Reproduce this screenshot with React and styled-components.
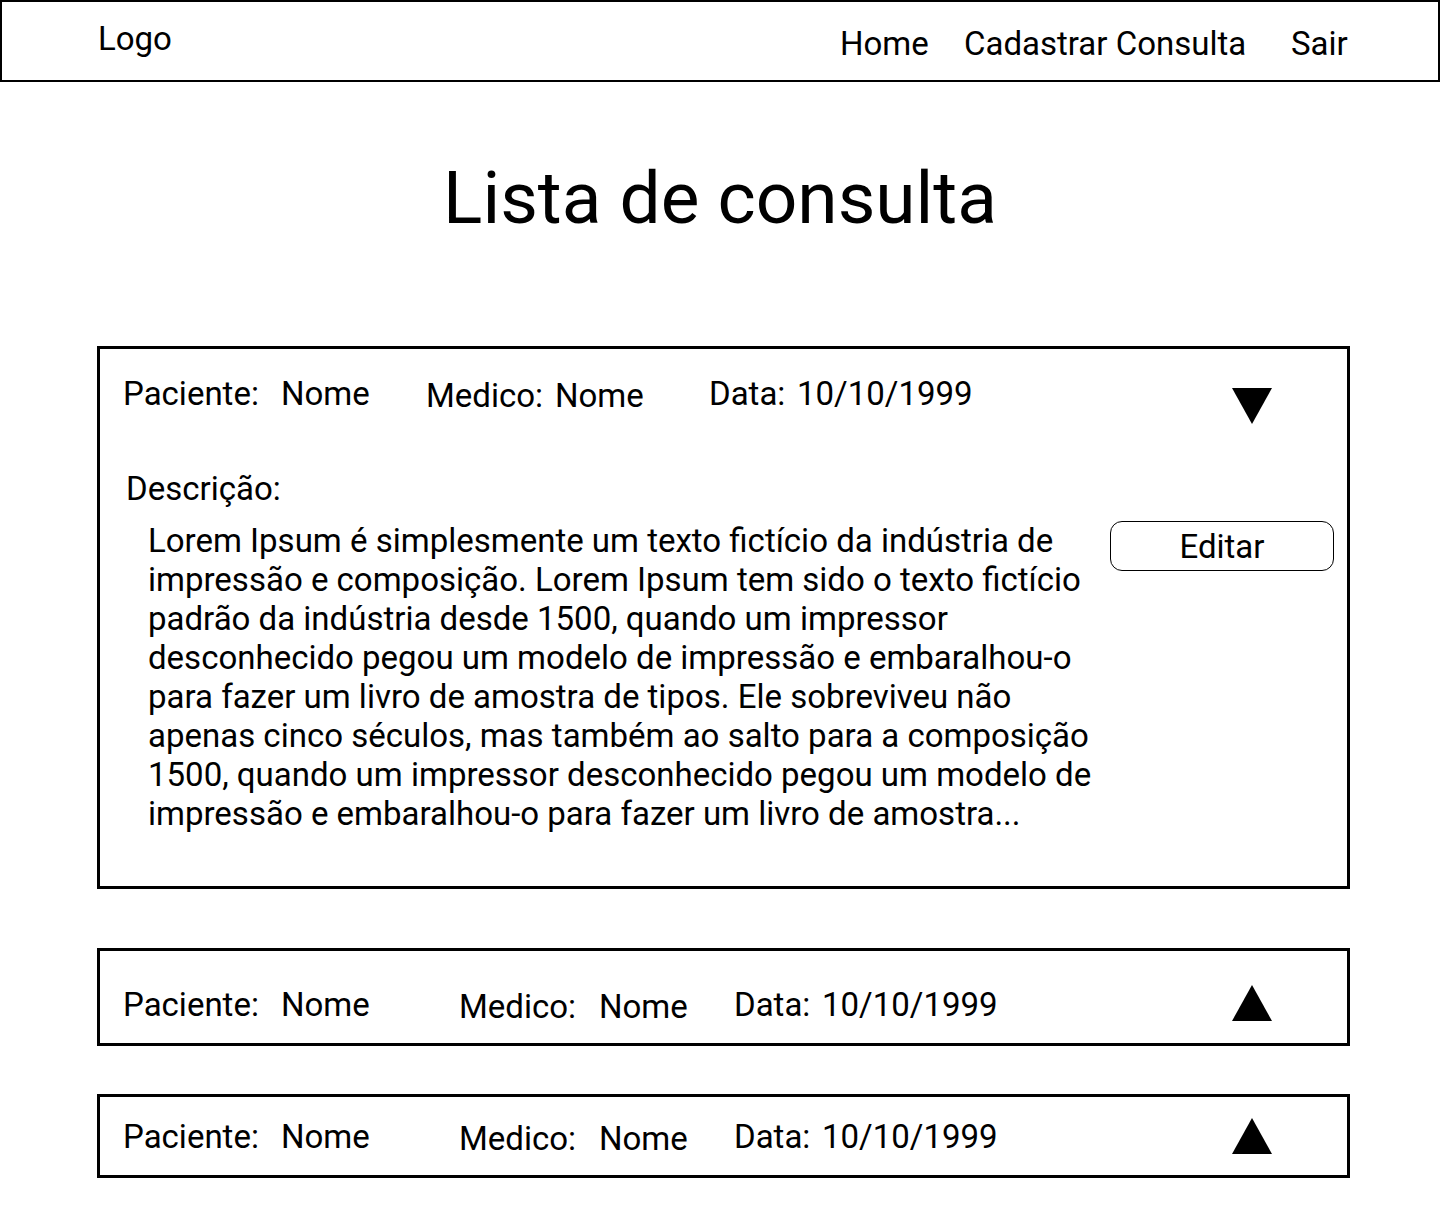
import React from 'react';
import styled, { createGlobalStyle } from 'styled-components';

const GlobalStyle = createGlobalStyle`
  body {
    margin: 0;
    background: #fff;
    color: #000;
    font-family: Roboto, "Liberation Sans", sans-serif;
  }
`

const descricao = [
  'Lorem Ipsum é simplesmente um texto fictício da indústria de',
  'impressão e composição. Lorem Ipsum tem sido o texto fictício',
  'padrão da indústria desde 1500, quando um impressor',
  'desconhecido pegou um modelo de impressão e embaralhou-o',
  'para fazer um livro de amostra de tipos. Ele sobreviveu não',
  'apenas cinco séculos, mas também ao salto para a composição',
  '1500, quando um impressor desconhecido pegou um modelo de',
  'impressão e embaralhou-o para fazer um livro de amostra...',
];

const consultas = [
  { id: 1, open: true, cols: '303px 283px 1fr auto', medicoLabel: 129, top: 29, bottom: 53, gap: 0, arrow: 10 },
  { id: 2, open: false, cols: '336px 275px 1fr auto', medicoLabel: 140, top: 38, bottom: 22, gap: 59, arrow: -4 },
  { id: 3, open: false, cols: '336px 275px 1fr auto', medicoLabel: 140, top: 24, bottom: 22, gap: 48, arrow: -3 },
];

function Arrow({ open, offset }) {
  return (
    <ArrowBox $offset={offset}>
      <svg width="40" height="36" viewBox="0 0 40 36">
        {open
          ? <polygon points="0,0 40,0 20,36" fill="#000" />
          : <polygon points="20,0 40,36 0,36" fill="#000" />}
      </svg>
    </ArrowBox>
  );
}

function Consulta({ item }) {
  return (
    <Card $top={item.top} $bottom={item.bottom} $gap={item.gap}>
      <Row $cols={item.cols}>
        <Field $label={158}>
          <span>Paciente:</span>
          <span>Nome</span>
        </Field>
        <Field $label={item.medicoLabel} $lower>
          <span>Medico:</span>
          <span>Nome</span>
        </Field>
        <Field $label={88}>
          <span>Data:</span>
          <span>10/10/1999</span>
        </Field>
        <Arrow open={item.open} offset={item.arrow} />
      </Row>
      {item.open && (
        <>
          <DescLabel>Descrição:</DescLabel>
          <DescBody>
            <DescText>
              {descricao.map((line, i) => <Line key={i}>{line}</Line>)}
            </DescText>
            <EditButton>Editar</EditButton>
          </DescBody>
        </>
      )}
    </Card>
  );
}

function App() {
  return (
    <>
      <GlobalStyle />
      <Header>
        <Logo>Logo</Logo>
        <Nav>
          <NavLink href="#">Home</NavLink>
          <NavLink href="#">Cadastrar Consulta</NavLink>
          <NavLink href="#">Sair</NavLink>
        </Nav>
      </Header>
      <Title>Lista de consulta</Title>
      <List>
        {consultas.map(c => <Consulta key={c.id} item={c} />)}
      </List>
    </>
  );
}

export default App;

const Header = styled.header`
  height: 78px;
  border: 2px solid #000;
  display: flex;
  justify-content: space-between;
  align-items: flex-start;
  padding-left: 96px;
`

const Logo = styled.div`
  font-size: 33px;
  line-height: 1;
  margin-top: 20px;
`

const Nav = styled.nav`
  width: 598px;
  display: grid;
  grid-template-columns: 124px 327px auto;
  margin-top: 25px;
`

const NavLink = styled.a`
  font-size: 33px;
  line-height: 1;
  color: #000;
  text-decoration: none;
  white-space: nowrap;
`

const Title = styled.h1`
  margin: 80px 0 0;
  font-size: 73px;
  font-weight: 400;
  line-height: 72px;
  text-align: center;
`

const List = styled.main`
  width: 1253px;
  margin: 112px 0 0 97px;
  display: flex;
  flex-direction: column;
`

const Card = styled.section`
  border: 3px solid #000;
  padding: ${p => p.$top}px 13px ${p => p.$bottom}px 23px;
  margin-top: ${p => p.$gap}px;
`

const Row = styled.div`
  display: grid;
  grid-template-columns: ${p => p.$cols};
  align-items: start;
  height: 32px;
  font-size: 33px;
  line-height: 32px;
`

const Field = styled.div`
  display: grid;
  grid-template-columns: ${p => p.$label}px auto;
  white-space: nowrap;
  padding-top: ${p => (p.$lower ? 2 : 0)}px;
`

const ArrowBox = styled.div`
  width: 40px;
  height: 36px;
  margin-right: 62px;
  margin-top: ${p => p.$offset}px;
  svg { display: block; }
`

const DescLabel = styled.div`
  font-size: 33px;
  line-height: 32px;
  margin: 63px 0 0 3px;
`

const DescBody = styled.div`
  display: flex;
  justify-content: space-between;
  align-items: flex-start;
  margin-top: 16px;
`

const DescText = styled.p`
  margin: 0 0 0 25px;
  font-size: 33px;
  line-height: 39px;
`

const Line = styled.span`
  display: block;
  white-space: nowrap;
`

const EditButton = styled.button`
  width: 224px;
  height: 50px;
  border: 1px solid #000;
  border-radius: 12px;
  background: #fff;
  color: #000;
  font-family: Roboto, "Liberation Sans", sans-serif;
  font-size: 33px;
  line-height: 1;
  padding: 0;
  display: flex;
  align-items: center;
  justify-content: center;
  cursor: pointer;
`
